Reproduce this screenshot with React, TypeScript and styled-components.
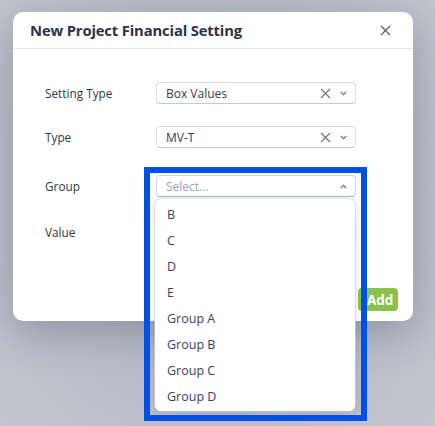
import React from "react";
import styled, { createGlobalStyle } from "styled-components";

const GlobalStyle = createGlobalStyle`
	html, body {
		margin: 0;
		padding: 0;
		height: 100%;
	}
	body {
		font-family: "Open Sans", "Noto Sans", sans-serif;
		background: radial-gradient(ellipse at 50% 45%, #a9adba 0%, #b8bbc7 55%, #c3c6d0 100%);
		overflow: hidden;
	}
`;

const Backdrop = styled.div`
	width: 435px;
	height: 426px;
	padding: 12px 22px 0 13px;
	box-sizing: border-box;
`;

const Modal = styled.section`
	width: 400px;
	height: 309px;
	background: #ffffff;
	border-radius: 10px;
	box-shadow: 0 12px 40px rgba(40, 46, 70, 0.28);
	display: flex;
	flex-direction: column;
`;

const Header = styled.header`
	height: 36px;
	display: flex;
	align-items: center;
	justify-content: space-between;
	padding: 0 22px 0 17px;
	border-bottom: 1px solid #e4e6ef;
`;

const Title = styled.h2`
	margin: 0;
	font-size: 14.8px;
	font-weight: 700;
	color: #2c3247;
	letter-spacing: -0.15px;
`;

const CloseButton = styled.button`
	all: unset;
	display: flex;
	color: #555b70;
	cursor: pointer;
`;

const Body = styled.main`
	flex: 1;
	padding: 33px 57px 0 32px;
	display: flex;
	flex-direction: column;
`;

const Row = styled.div<{ $mt: number }>`
	display: grid;
	grid-template-columns: 111px 200px;
	align-items: center;
	margin-top: ${(p) => p.$mt}px;
`;

const Label = styled.label`
	font-size: 11.8px;
	color: #30364c;
`;

const Field = styled.div`
	position: relative;
`;

const Select = styled.div<{ $open?: boolean }>`
	height: 22px;
	box-sizing: border-box;
	border: 1px solid ${(p) => (p.$open ? "#cfd4e4" : "#d6dae6")};
	border-bottom-color: ${(p) => (p.$open ? "#aab1c8" : "#c4c9da")};
	border-radius: 4px;
	display: flex;
	align-items: center;
	padding: 0 8px 0 9px;
	font-size: 12px;
	color: #333a57;
	background: #fff;
`;

const Value = styled.span<{ $placeholder?: boolean }>`
	flex: 1;
	color: ${(p) => (p.$placeholder ? "#9ca3bd" : "#333a57")};
`;

const Icons = styled.span`
	display: flex;
	align-items: center;
	gap: 9px;
	color: #6a7088;
`;

const Input = styled.div`
	height: 22px;
	box-sizing: border-box;
	border: 1px solid #d6dae6;
	border-radius: 4px;
`;

const Menu = styled.ul`
	position: absolute;
	left: -1px;
	top: 24px;
	width: 200px;
	margin: 0;
	padding: 2px 0;
	list-style: none;
	background: #fff;
	border-radius: 6px;
	box-shadow: 0 2px 10px rgba(50, 56, 80, 0.18), 0 0 0 1px rgba(220, 224, 235, 0.6);
	z-index: 2;
`;

const MenuItem = styled.li`
	height: 26px;
	display: flex;
	align-items: center;
	padding-left: 12px;
	font-size: 12.5px;
	color: #3a4162;
`;

const Highlight = styled.div`
	position: absolute;
	left: -12px;
	top: -8px;
	width: 223px;
	height: 254px;
	box-sizing: border-box;
	border: 6px solid #004fe6;
	z-index: 3;
	pointer-events: none;
`;

const Footer = styled.footer`
	display: flex;
	justify-content: flex-end;
	padding: 0 15px 10px;
`;

const AddButton = styled.button`
	all: unset;
	height: 23px;
	width: 40px;
	box-sizing: border-box;
	padding-left: 9px;
	display: flex;
	align-items: center;
	border-radius: 4px;
	background: #8bc34a;
	color: #fff;
	font-weight: 700;
	font-size: 13.5px;
`;

const Clear = () => (
	<svg width="11" height="11" viewBox="0 0 11 11" fill="none" stroke="currentColor" strokeWidth="1.1">
		<path d="M1 1L10 10M10 1L1 10" />
	</svg>
);

const Chevron = ({ up }: { up?: boolean }) => (
	<svg width="7" height="5" viewBox="0 0 7 5" fill="none" stroke="currentColor" strokeWidth="1.1">
		<path d={up ? "M0.8 4L3.5 1.3L6.2 4" : "M0.8 1L3.5 3.7L6.2 1"} />
	</svg>
);

const groups = ["B", "C", "D", "E", "Group A", "Group B", "Group C", "Group D"];

export default function App() {
	return (
		<>
			<GlobalStyle />
			<Backdrop>
				<Modal>
					<Header>
						<Title>New Project Financial Setting</Title>
						<CloseButton>
							<svg width="11" height="11" viewBox="0 0 11 11" fill="none" stroke="currentColor" strokeWidth="1.2">
								<path d="M1 1L10 10M10 1L1 10" />
							</svg>
						</CloseButton>
					</Header>
					<Body>
						<Row $mt={0}>
							<Label>Setting Type</Label>
							<Select>
								<Value>Box Values</Value>
								<Icons>
									<Clear />
									<Chevron />
								</Icons>
							</Select>
						</Row>
						<Row $mt={22}>
							<Label>Type</Label>
							<Select>
								<Value>MV-T</Value>
								<Icons>
									<Clear />
									<Chevron />
								</Icons>
							</Select>
						</Row>
						<Row $mt={27}>
							<Label>Group</Label>
							<Field>
								<Select $open>
									<Value $placeholder>Select...</Value>
									<Icons>
										<Chevron up />
									</Icons>
								</Select>
								<Menu>
									{groups.map((g) => (
										<MenuItem key={g}>{g}</MenuItem>
									))}
								</Menu>
								<Highlight />
							</Field>
						</Row>
						<Row $mt={24}>
							<Label>Value</Label>
							<Input />
						</Row>
					</Body>
					<Footer>
						<AddButton>Add</AddButton>
					</Footer>
				</Modal>
			</Backdrop>
		</>
	);
}
